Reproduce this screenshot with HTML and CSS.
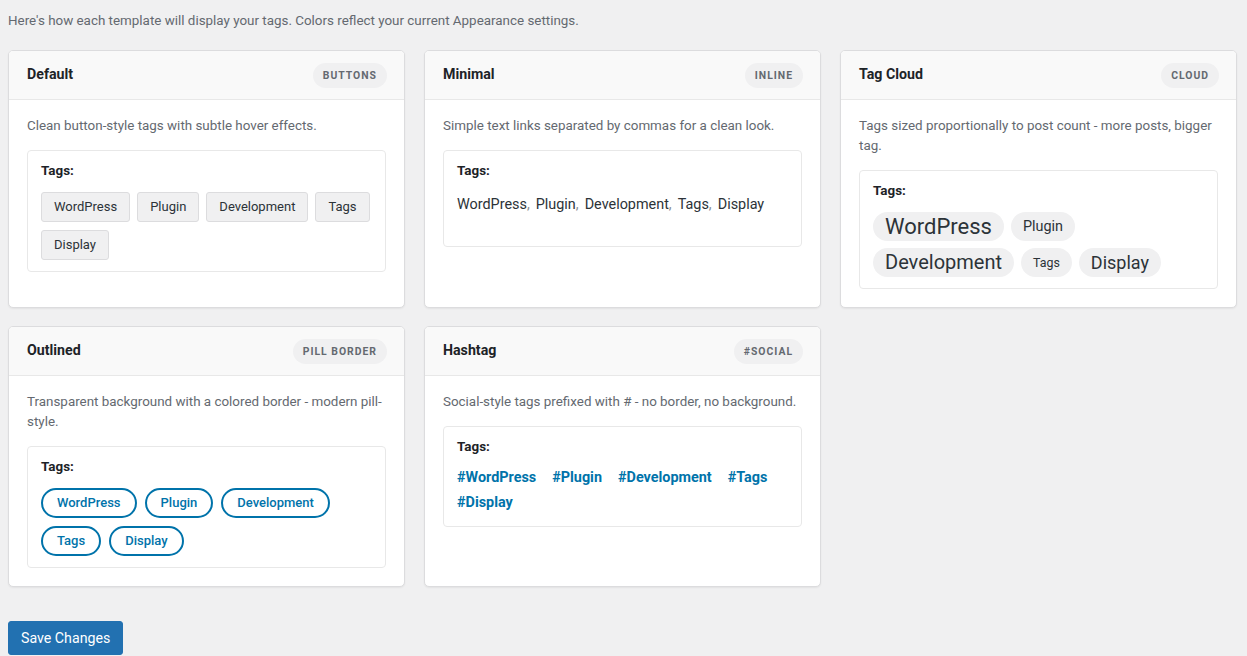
FILE: index.html
```html
<!DOCTYPE html>
<html lang="en">
<head>
    <meta charset="UTF-8">
    <meta name="viewport" content="width=device-width, initial-scale=1.0">
    <title>Tag Templates - Preview</title>
    <link rel="stylesheet" href="styles.css">
</head>
<body>

    <div class="wrap">
        <p class="intro">Here's how each template will display your tags. Colors reflect your current Appearance settings.</p>

        <div class="template-grid">

            <div class="template-card">
                <div class="card-header">
                    <h3>Default</h3>
                    <span class="badge">Buttons</span>
                </div>
                <div class="card-body">
                    <p class="card-desc">Clean button-style tags with subtle hover effects.</p>
                    <div class="preview-box">
                        <div class="preview-label">Tags:</div>
                        <div class="tags tags-default">
                            <a href="#">WordPress</a>
                            <a href="#">Plugin</a>
                            <a href="#">Development</a>
                            <a href="#">Tags</a>
                            <a href="#">Display</a>
                        </div>
                    </div>
                </div>
            </div>

            <div class="template-card">
                <div class="card-header">
                    <h3>Minimal</h3>
                    <span class="badge">Inline</span>
                </div>
                <div class="card-body">
                    <p class="card-desc">Simple text links separated by commas for a clean look.</p>
                    <div class="preview-box">
                        <div class="preview-label">Tags:</div>
                        <div class="tags tags-minimal">
                            <a href="#">WordPress</a><span class="sep">,</span>
                            <a href="#">Plugin</a><span class="sep">,</span>
                            <a href="#">Development</a><span class="sep">,</span>
                            <a href="#">Tags</a><span class="sep">,</span>
                            <a href="#">Display</a>
                        </div>
                    </div>
                </div>
            </div>

            <div class="template-card">
                <div class="card-header">
                    <h3>Tag Cloud</h3>
                    <span class="badge">Cloud</span>
                </div>
                <div class="card-body">
                    <p class="card-desc">Tags sized proportionally to post count - more posts, bigger tag.</p>
                    <div class="preview-box">
                        <div class="preview-label">Tags:</div>
                        <div class="tags tags-cloud">
                            <a href="#" class="size-xl">WordPress</a>
                            <a href="#" class="size-s">Plugin</a>
                            <a href="#" class="size-l">Development</a>
                            <a href="#" class="size-xs">Tags</a>
                            <a href="#" class="size-m">Display</a>
                        </div>
                    </div>
                </div>
            </div>

            <div class="template-card">
                <div class="card-header">
                    <h3>Outlined</h3>
                    <span class="badge">Pill Border</span>
                </div>
                <div class="card-body">
                    <p class="card-desc">Transparent background with a colored border - modern pill-style.</p>
                    <div class="preview-box">
                        <div class="preview-label">Tags:</div>
                        <div class="tags tags-outlined">
                            <a href="#">WordPress</a>
                            <a href="#">Plugin</a>
                            <a href="#">Development</a>
                            <a href="#">Tags</a>
                            <a href="#">Display</a>
                        </div>
                    </div>
                </div>
            </div>

            <div class="template-card">
                <div class="card-header">
                    <h3>Hashtag</h3>
                    <span class="badge">#Social</span>
                </div>
                <div class="card-body">
                    <p class="card-desc">Social-style tags prefixed with # - no border, no background.</p>
                    <div class="preview-box">
                        <div class="preview-label">Tags:</div>
                        <div class="tags tags-hashtag">
                            <a href="#">#WordPress</a>
                            <a href="#">#Plugin</a>
                            <a href="#">#Development</a>
                            <a href="#">#Tags</a>
                            <a href="#">#Display</a>
                        </div>
                    </div>
                </div>
            </div>

        </div>

        <button class="save-button">Save Changes</button>
    </div>

</body>
</html>
```

FILE: styles.css
```css
body {
    font-family: Roboto, "Noto Sans", Arial, sans-serif;
    background-color: #f0f0f1;
    color: #3c434a;
    margin: 0;
    padding: 0;
}

.wrap {
    padding: 11px 8px 0 8px;
}

.intro {
    font-size: 13.4px;
    line-height: 20px;
    color: #646970;
    margin: 0 0 19px;
}

.template-grid {
    display: grid;
    grid-template-columns: repeat(3, 1fr);
    gap: 18px 19px;
    max-width: 1229px;
}

.template-card {
    background-color: #fff;
    border: 1px solid #dcdcde;
    border-radius: 5px;
    box-shadow: 0 1px 2px rgba(0, 0, 0, 0.06);
    overflow: hidden;
}

.card-header {
    display: flex;
    align-items: center;
    justify-content: space-between;
    height: 48px;
    padding: 0 17px 0 18px;
    background-color: #f9f9f9;
    border-bottom: 1px solid #e8e8e8;
}

.card-header h3 {
    margin: 0 0 2px;
    font-size: 14.2px;
    font-weight: 700;
    color: #1d2327;
}

.badge {
    display: inline-block;
    height: 25px;
    line-height: 25px;
    padding: 0 10px;
    border-radius: 13px;
    background-color: #f0f0f1;
    color: #646970;
    font-size: 10.4px;
    font-weight: 700;
    letter-spacing: 1px;
    text-transform: uppercase;
}

.card-body {
    padding: 16px 18px 18px;
}

.card-desc {
    margin: 0 0 14px;
    font-size: 13.4px;
    line-height: 20px;
    color: #646970;
}

.preview-box {
    border: 1px solid #e8e8e8;
    border-radius: 4px;
    padding: 11px 13px 11px;
}

.preview-label {
    font-size: 13.4px;
    font-weight: 700;
    color: #1d2327;
    line-height: 18px;
    margin-bottom: 12px;
}

.tags {
    display: flex;
    flex-wrap: wrap;
    align-items: center;
}

.tags a {
    text-decoration: none;
}

/* default */
.tags-default {
    gap: 8px 7px;
}

.tags-default a {
    display: inline-block;
    height: 30px;
    line-height: 28px;
    box-sizing: border-box;
    padding: 0 12px;
    font-size: 13px;
    color: #2c3338;
    background-color: #f0f0f1;
    border: 1px solid #dcdcde;
    border-radius: 3px;
}

/* minimal */
.tags-minimal {
    font-size: 14.4px;
    line-height: 20px;
    color: #2c3338;
    padding: 3px 0 20px;
}

.tags-minimal a {
    color: #2c3338;
}

.tags-minimal .sep {
    margin-right: 6px;
    color: #8c8f94;
}

/* cloud */
.tags-cloud {
    gap: 7px;
}

.tags-cloud a {
    display: inline-block;
    height: 29px;
    line-height: 29px;
    padding: 0 12px;
    border-radius: 15px;
    background-color: #f0f0f1;
    color: #2c3338;
}

.tags-cloud .size-xl { font-size: 22px; }
.tags-cloud .size-l { font-size: 20px; }
.tags-cloud .size-m { font-size: 18px; }
.tags-cloud .size-s { font-size: 14.4px; }
.tags-cloud .size-xs { font-size: 12.4px; }

/* outlined */
.tags-outlined {
    gap: 8px;
}

.tags-outlined a {
    display: inline-block;
    height: 30px;
    line-height: 26px;
    box-sizing: border-box;
    padding: 0 14px;
    font-size: 13px;
    font-weight: 500;
    color: #0073aa;
    border: 2px solid #0073aa;
    border-radius: 15px;
}

/* hashtag */
.tags-hashtag {
    column-gap: 16px;
    margin-top: -3px;
}

.tags-hashtag a {
    font-size: 14.4px;
    font-weight: 700;
    line-height: 25px;
    color: #0073aa;
}

.save-button {
    margin-top: 34px;
    height: 34px;
    padding: 0 12px;
    font-family: Roboto, "Noto Sans", Arial, sans-serif;
    font-size: 14.2px;
    color: #fff;
    background-color: #2271b1;
    border: 1px solid #2271b1;
    border-radius: 3px;
    cursor: pointer;
}

.save-button:hover {
    background-color: #135e96;
}
```
